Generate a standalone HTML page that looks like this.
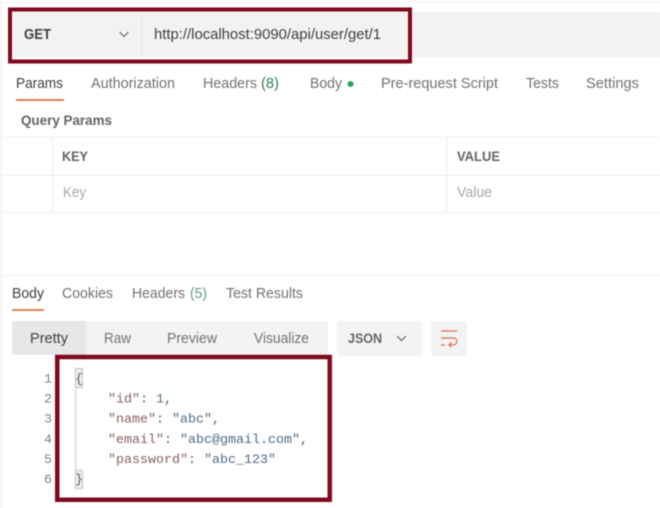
<!DOCTYPE html>
<html>
<head>
<meta charset="utf-8">
<style>
html,body{margin:0;padding:0;background:#fff;width:660px;height:508px;overflow:hidden}
svg{display:block;filter:blur(0.4px)}
text{font-family:"Liberation Sans",sans-serif;font-size:14.5px;fill:#727272}
.d{fill:#3f3f3f}
.b{font-weight:bold}
.h{font-size:13.5px;fill:#646464}
.m{font-family:"Liberation Mono",monospace;font-size:13.33px}
.k{fill:#8a6060}
.s{fill:#4a6a88}
.p{fill:#5c5c5c}
.n{fill:#4a7d7b}
.l{fill:#808080}
</style>
</head>
<body>
<svg width="660" height="508" viewBox="0 0 660 508" xmlns="http://www.w3.org/2000/svg">
<rect x="0" y="0" width="660" height="508" fill="#fff"/>
<rect x="0" y="0" width="2" height="508" fill="#f4f4f4"/>
<rect x="2" y="2" width="658" height="1" fill="#f2f2f2"/>

<!-- URL bar -->
<rect x="12" y="12" width="648" height="45" fill="#f2f2f2"/>
<rect x="141" y="12" width="1" height="45" fill="#e6e6e6"/>
<text x="24" y="39" class="d b" textLength="27" lengthAdjust="spacingAndGlyphs">GET</text>
<path d="M119.5 32l4.5 4.5 4.5-4.5" fill="none" stroke="#666" stroke-width="1.2"/>
<text x="154" y="39" class="d" textLength="227" lengthAdjust="spacingAndGlyphs">http://localhost:9090/api/user/get/1</text>
<rect x="10" y="9.500" width="400" height="52" fill="none" stroke="#80091f" stroke-width="4"/>

<!-- Request tabs -->
<text x="16" y="88" class="d" textLength="47" lengthAdjust="spacingAndGlyphs">Params</text>
<text x="91" y="88" textLength="84" lengthAdjust="spacingAndGlyphs">Authorization</text>
<text x="203" y="88" textLength="54" lengthAdjust="spacingAndGlyphs">Headers</text>
<text x="261" y="88" textLength="18" lengthAdjust="spacingAndGlyphs" style="fill:#2f7d55">(8)</text>
<text x="310" y="88" textLength="32" lengthAdjust="spacingAndGlyphs">Body</text>
<circle cx="350.500" cy="84" r="3" fill="#26a65b"/>
<text x="381" y="88" textLength="117" lengthAdjust="spacingAndGlyphs">Pre-request Script</text>
<text x="526" y="88" textLength="33" lengthAdjust="spacingAndGlyphs">Tests</text>
<text x="586" y="88" textLength="53" lengthAdjust="spacingAndGlyphs">Settings</text>
<rect x="16" y="99" width="48" height="2" fill="#e2825a"/>
<text x="21" y="125" class="b h" textLength="91" lengthAdjust="spacingAndGlyphs">Query Params</text>

<!-- Table -->
<rect x="2" y="137" width="658" height="1" fill="#ececec"/>
<rect x="2" y="175" width="658" height="1" fill="#ececec"/>
<rect x="2" y="212" width="658" height="1" fill="#ececec"/>
<rect x="52" y="138" width="1" height="74" fill="#ececec"/>
<rect x="446" y="138" width="1" height="74" fill="#ececec"/>
<text x="62" y="161" class="b h" textLength="26" lengthAdjust="spacingAndGlyphs">KEY</text>
<text x="457" y="161" class="b h" textLength="43" lengthAdjust="spacingAndGlyphs">VALUE</text>
<text x="63" y="197" style="fill:#a8a8a8" textLength="23" lengthAdjust="spacingAndGlyphs">Key</text>
<text x="457" y="197" style="fill:#a8a8a8" textLength="35" lengthAdjust="spacingAndGlyphs">Value</text>

<rect x="2" y="275" width="658" height="1" fill="#ececec"/>

<!-- Response tabs -->
<text x="12" y="298" class="d" textLength="32" lengthAdjust="spacingAndGlyphs">Body</text>
<text x="62" y="298" textLength="51" lengthAdjust="spacingAndGlyphs">Cookies</text>
<text x="132" y="298" textLength="53" lengthAdjust="spacingAndGlyphs">Headers</text>
<text x="190" y="298" textLength="17" lengthAdjust="spacingAndGlyphs" style="fill:#5f9c7d">(5)</text>
<text x="226" y="298" textLength="77" lengthAdjust="spacingAndGlyphs">Test Results</text>
<rect x="12" y="309" width="32" height="2" fill="#e2825a"/>

<!-- Format bar -->
<rect x="12" y="321" width="316" height="34" rx="3" fill="#f3f3f3"/>
<path d="M15 321h71v34h-71a3 3 0 0 1-3-3v-28a3 3 0 0 1 3-3z" fill="#e7e7e7"/>
<text x="30" y="343" class="d" textLength="38" lengthAdjust="spacingAndGlyphs">Pretty</text>
<text x="104" y="343" textLength="27" lengthAdjust="spacingAndGlyphs">Raw</text>
<text x="167" y="343" textLength="50" lengthAdjust="spacingAndGlyphs">Preview</text>
<text x="254" y="343" textLength="55" lengthAdjust="spacingAndGlyphs">Visualize</text>
<rect x="337" y="321" width="85" height="35" rx="3" fill="#f3f3f3"/>
<text x="348" y="343" class="b h" textLength="34" lengthAdjust="spacingAndGlyphs">JSON</text>
<path d="M397 336l4.500 4.500 4.500-4.500" fill="none" stroke="#666" stroke-width="1.200"/>
<rect x="431" y="321" width="36" height="35" rx="3" fill="#f3f3f3"/>
<path d="M441 331h16M441 338h12.500a3.200 3.200 0 0 1 0 6.800h-4.500M441 345h4M451.500 342.500l-2.700 2.300 2.700 2.300" fill="none" stroke="#d9734e" stroke-width="1.200"/>

<!-- Code -->
<text x="44" y="382.500" class="m l">1</text>
<text x="44" y="402.600" class="m l">2</text>
<text x="44" y="422.700" class="m l">3</text>
<text x="44" y="442.800" class="m l">4</text>
<text x="44" y="462.900" class="m l">5</text>
<text x="44" y="483" class="m l">6</text>
<rect x="75.500" y="368.500" width="7" height="19" fill="#efefef" stroke="#c4c4c4"/>
<rect x="75.500" y="470.500" width="7" height="18" fill="#efefef" stroke="#c4c4c4"/>
<rect x="75" y="388" width="1.500" height="82" fill="#dcdcdc"/>
<text x="75" y="382.500" class="m p">{</text>
<text x="75" y="483" class="m p">}</text>

<text x="108" y="402.600" class="m"><tspan class="k">"id"</tspan><tspan class="p">: </tspan><tspan class="n">1</tspan><tspan class="p">,</tspan></text>
<text x="108" y="422.700" class="m"><tspan class="k">"name"</tspan><tspan class="p">: </tspan><tspan class="s">"abc"</tspan><tspan class="p">,</tspan></text>
<text x="108" y="442.800" class="m"><tspan class="k">"email"</tspan><tspan class="p">: </tspan><tspan class="s">"abc@gmail.com"</tspan><tspan class="p">,</tspan></text>
<text x="108" y="462.900" class="m"><tspan class="k">"password"</tspan><tspan class="p">: </tspan><tspan class="s">"abc_123"</tspan></text>

<rect x="57.250" y="357" width="272.500" height="142.750" fill="none" stroke="#80091f" stroke-width="4.500"/>
</svg>
</body>
</html>
